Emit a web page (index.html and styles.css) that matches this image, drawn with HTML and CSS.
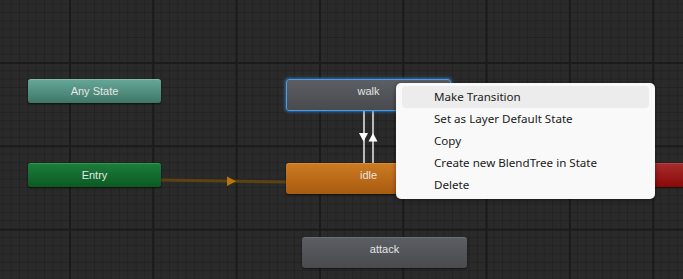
FILE: index.html
```html
<!DOCTYPE html>
<html>
<head>
	<title>Animator</title>
	<link rel="stylesheet" href="styles.css">
</head>
<body>
<div class="graph">
  <svg class="links" width="683" height="279">
    <!-- entry -> idle -->
    <line x1="161" y1="180" x2="286" y2="182" stroke="#5c4210" stroke-width="3"/>
    <polygon points="227,176.5 236,181.3 227,186" fill="#b5780e"/>
    <!-- walk <-> idle -->
    <line x1="364" y1="111" x2="364" y2="163" stroke="#b8b8b8" stroke-width="2"/>
    <line x1="373" y1="111" x2="373" y2="163" stroke="#b8b8b8" stroke-width="2"/>
    <polygon points="359,133 368,133 363.5,141.5" fill="#fff"/>
    <polygon points="368.5,141.5 377.5,141.5 373,133" fill="#fff"/>
  </svg>

  <div class="node any">Any State</div>
  <div class="node entry">Entry</div>
  <div class="node state walk">walk</div>
  <div class="node idle">idle</div>
  <div class="node state attack">attack</div>
  <div class="node exit">Exit</div>

  <ul class="menu">
    <li class="hover">Make Transition</li>
    <li>Set as Layer Default State</li>
    <li>Copy</li>
    <li>Create new BlendTree in State</li>
    <li>Delete</li>
  </ul>
</div>
</body>
</html>
```

FILE: styles.css
```css
html, body {
  margin: 0;
  padding: 0;
}
body {
  background: #2a2a2a;
  font-family: 'Liberation Sans', Arial, sans-serif;
}
.graph {
  position: relative;
  width: 683px;
  height: 279px;
  overflow: hidden;
  background-color: #2a2a2a;
  background-image:
    linear-gradient(to right, #1b1b1b 1.5px, transparent 1.5px),
    linear-gradient(to bottom, #1b1b1b 1.5px, transparent 1.5px),
    linear-gradient(to right, #232323 1px, transparent 1px),
    linear-gradient(to bottom, #232323 1px, transparent 1px);
  background-size: 83.33px 83.33px, 83.33px 83.33px, 8.333px 8.333px, 8.333px 8.333px;
  background-position: 69px 62px, 69px 62px, 69px 62px, 69px 62px;
}
.links {
  position: absolute;
  left: 0;
  top: 0;
}

/* state nodes, placed on the graph canvas */
.node {
  position: absolute;
  box-sizing: border-box;
  width: 165px;
  height: 31px;
  line-height: 23px;
  text-align: center;
  border-radius: 3px;
  font-size: 11px;
  color: #e4e4e4;
  box-shadow: 0 1px 2px rgba(0, 0, 0, 0.6);
}
.any {
  left: 28px;
  top: 79px;
  width: 133px;
  height: 24px;
  background: linear-gradient(#64a696, #3f7668);
  border-top: 1px solid #7dbcad;
}
.entry {
  left: 28px;
  top: 163px;
  width: 133px;
  height: 24px;
  background: linear-gradient(#1c7c3a, #0b5a22);
  border-top: 1px solid #2f9a50;
}
.state {
  background: linear-gradient(#5b5e63, #484a4e);
  border-top: 1px solid #6c6f74;
}
.walk {
  left: 286px;
  top: 79px;
  height: 32px;
  line-height: 22px;
  border: 1px solid #4a9ee8;
  box-shadow: 0 0 3px 1px rgba(60, 140, 220, 0.7);
}
.idle {
  left: 286px;
  top: 163px;
  background: linear-gradient(#cc7a22, #a85c10);
  border-top: 1px solid #dc8c34;
}
.attack {
  left: 302px;
  top: 237px;
}
.exit {
  left: 560px;
  top: 163px;
  width: 140px;
  height: 24px;
  background: linear-gradient(#a52c2c, #8a0808);
  border-top: 1px solid #b84040;
}

/* context menu */
.menu {
  position: absolute;
  left: 396px;
  top: 83px;
  width: 259px;
  margin: 0;
  padding: 3px 0;
  list-style: none;
  background: #f9f9f9;
  border-radius: 5px;
  box-shadow: 0 1px 4px rgba(0, 0, 0, 0.45);
  font-family: 'Noto Sans', 'Open Sans', sans-serif;
  font-size: 11.6px;
  color: #1a1a1a;
}
.menu li {
  height: 22px;
  line-height: 22px;
  margin: 0 6px;
  padding-left: 32px;
  border-radius: 4px;
}
.menu li.hover {
  background: #ececec;
}
```
